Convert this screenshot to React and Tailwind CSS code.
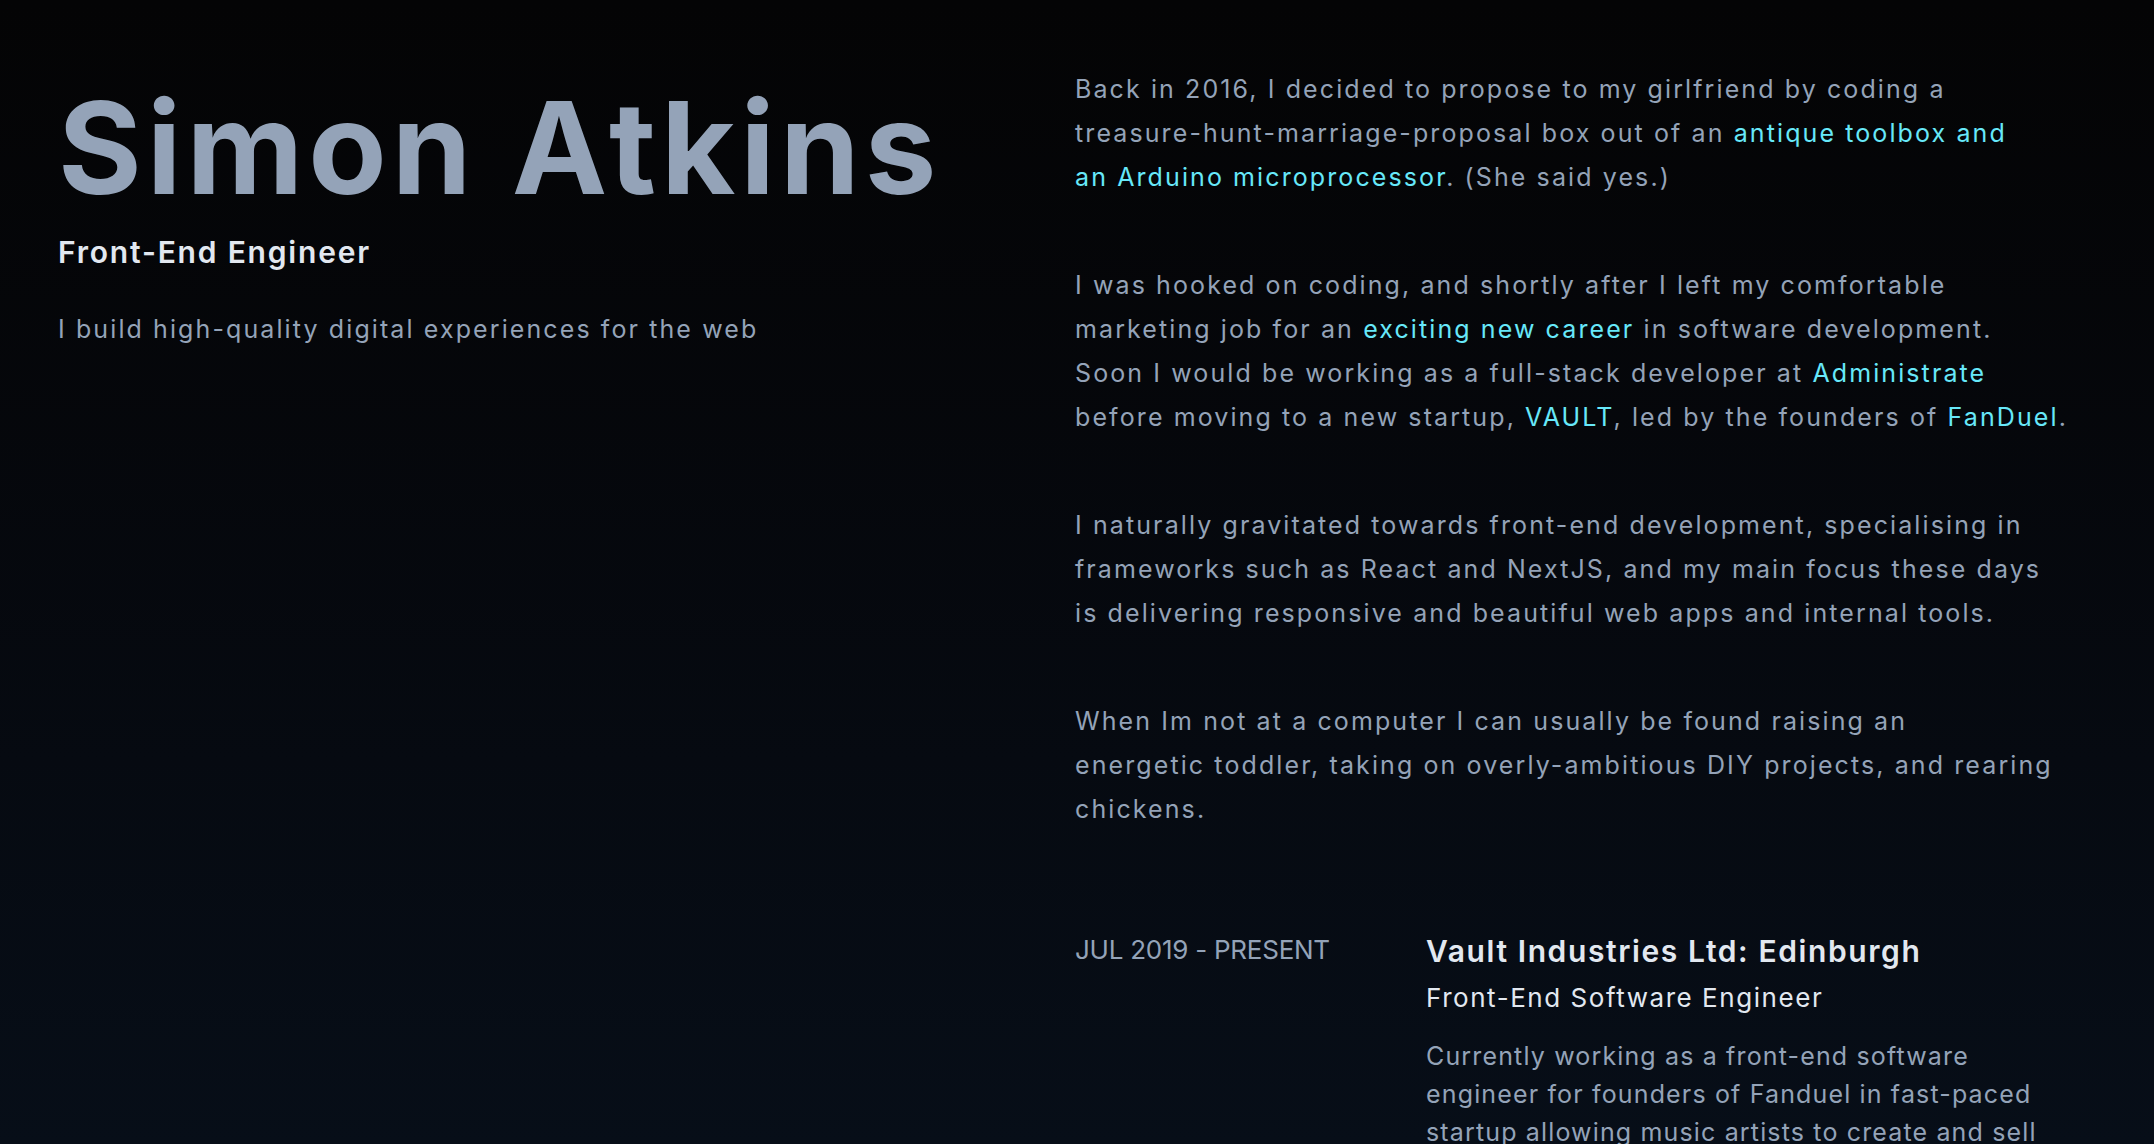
import React from "react";

function A({ children }) {
  return (
    <a href="#" className="text-[#67e8f9]">
      {children}
    </a>
  );
}

export default function App() {
  return (
    <div className="h-screen w-full overflow-hidden bg-gradient-to-b from-[#040405] to-[#070e18] font-[Inter,sans-serif] text-[#94a3b8]">
      <div className="flex pl-[58px]">
        <header className="w-[1017px] shrink-0 pt-[84px]">
          <h1 className="text-[128px] font-bold leading-none tracking-[5px] text-[#94a3b8]">
            Simon Atkins
          </h1>
          <h2 className="mt-[19px] text-[30px] font-semibold leading-[42px] tracking-[1.8px] text-[#e2e8f0]">
            Front-End Engineer
          </h2>
          <p className="mt-[34px] text-[25px] leading-[44px] tracking-[2.1px]">
            I build high-quality digital experiences for the web
          </p>
        </header>

        <main className="flex-1 pt-[67px]">
          <div className="flex flex-col gap-[64px] whitespace-nowrap text-[25px] leading-[44px] tracking-[2.1px]">
            <p>
              Back in 2016, I decided to propose to my girlfriend by coding a
              <br />
              treasure-hunt-marriage-proposal box out of an{" "}
              <A>
                antique toolbox and
                <br />
                an Arduino microprocessor
              </A>
              . (She said yes.)
            </p>
            <p>
              I was hooked on coding, and shortly after I left my comfortable
              <br />
              marketing job for an <A>exciting new career</A> in software
              development.
              <br />
              Soon I would be working as a full-stack developer at{" "}
              <A>Administrate</A>
              <br />
              before moving to a new startup, <A>VAULT</A>, led by the founders
              of <A>FanDuel</A>.
            </p>
            <p>
              I naturally gravitated towards front-end development, specialising
              in
              <br />
              frameworks such as React and NextJS, and my main focus these days
              <br />
              is delivering responsive and beautiful web apps and internal
              tools.
            </p>
            <p>
              When Im not at a computer I can usually be found raising an
              <br />
              energetic toddler, taking on overly-ambitious DIY projects, and
              rearing
              <br />
              chickens.
            </p>
          </div>

          <section className="mt-[100px] flex">
            <div className="w-[351px] shrink-0 text-[26px] leading-[38px] tracking-[-0.25px] text-[#94a3b8]">
              JUL 2019 - PRESENT
            </div>
            <div className="flex-1 whitespace-nowrap">
              <h3 className="text-[30px] font-semibold leading-[40px] tracking-[1.6px] text-[#e2e8f0]">
                Vault Industries Ltd: Edinburgh
              </h3>
              <h4 className="mt-[7px] text-[26px] leading-[40px] tracking-[1.55px] text-[#e2e8f0]">
                Front-End Software Engineer
              </h4>
              <p className="mt-[19px] text-[25px] leading-[38px] tracking-[1.15px] text-[#94a3b8]">
                Currently working as a front-end software
                <br />
                engineer for founders of Fanduel in fast-paced
                <br />
                startup allowing music artists to create and sell
              </p>
            </div>
          </section>
        </main>
      </div>
    </div>
  );
}
